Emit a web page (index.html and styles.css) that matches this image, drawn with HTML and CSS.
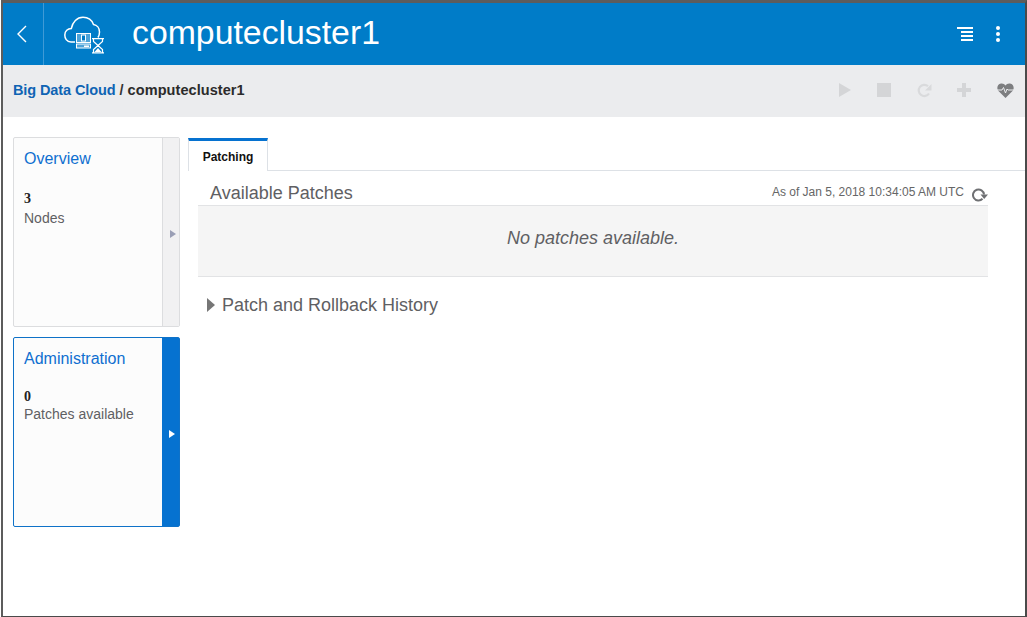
FILE: index.html
```html
<!DOCTYPE html>
<html lang="en">
<head>
<meta charset="utf-8">
<title>computecluster1</title>
<link rel="stylesheet" href="styles.css">
</head>
<body>
<div class="frame">
  <header class="topbar">
    <div class="back">
      <svg width="12" height="20" viewBox="0 0 12 20"><path d="M10 2 2 10l8 8" fill="none" stroke="#fff" stroke-width="1.400"/></svg>
    </div>
    <svg class="logo" width="40" height="38" viewBox="0 0 40 38">
      <path d="M11 26H7C2.500 26 .8 22 .8 19c0-4 3-6.500 6.500-6.500C8.500 6 13 1.200 19 1.200c5 0 9 3 10.500 7.300 3.500.5 6 3.500 6 7.500 0 2-.5 4-1.500 5.500" fill="none" stroke="#fff" stroke-width="1.500"/>
      <rect x="12.500" y="17.500" width="14" height="9" fill="#fff" fill-opacity=".3" stroke="#fff"/>
      <rect x="17.500" y="19" width="4" height="6" fill="#007cc8" stroke="#fff"/>
      <rect x="12.500" y="28" width="14" height="4" fill="#fff" fill-opacity=".3" stroke="#fff"/>
      <rect x="20" y="29.500" width="5" height="1.500" fill="#fff"/>
      <path d="M28 22.700h12M28 36.800h12M29.500 23v2.500l4.500 4-4.500 4v3M38.500 23v2.500l-4.500 4 4.500 4v3" fill="none" stroke="#fff" stroke-width="1.200"/>
      <path d="M30.500 36l3.500-4 3.500 4z" fill="#fff"/>
    </svg>
    <h1 class="title">computecluster1</h1>
    <div class="top-actions">
      <svg width="16" height="14" viewBox="0 0 16 14"><path d="M0 1h16M4 5h12M4 9h12M4 13h12" stroke="#fff" stroke-width="2"/></svg>
      <svg width="6" height="16" viewBox="0 0 6 16"><circle cx="3" cy="2" r="2" fill="#fff"/><circle cx="3" cy="8" r="2" fill="#fff"/><circle cx="3" cy="14" r="2" fill="#fff"/></svg>
    </div>
  </header>
  <div class="subbar">
    <div class="crumbs"><a class="crumb-link">Big Data Cloud</a> / <span class="crumb-current">computecluster1</span></div>
    <div class="tools">
      <svg width="14" height="16" viewBox="0 0 14 16"><path d="M1 1l12 7-12 7z" fill="#d4d5d7"/></svg>
      <svg width="14" height="14" viewBox="0 0 14 14"><rect width="14" height="14" fill="#d4d5d7"/></svg>
      <svg width="15" height="15" viewBox="0 0 15 15"><path d="M12 10.500A5.600 5.600 0 1 1 11 3.200" fill="none" stroke="#d9dadc" stroke-width="2.200"/><path d="M14.500 1v6.500H8z" fill="#d9dadc"/></svg>
      <svg width="14" height="14" viewBox="0 0 14 14"><path d="M7 0v14M0 7h14" stroke="#d4d5d7" stroke-width="4"/></svg>
      <svg width="17" height="15" viewBox="0 0 17 15"><path d="M8.500 15 1 7.500C-.5 5 .5 1 4 .5 6 .2 7.500 1 8.500 2.500 9.500 1 11 .2 13 .5c3.500.5 4.500 4.500 3 7z" fill="#7d7e80"/><path d="M0 7h5l1.500-2.500L8.500 10l1.500-4 1 1h6" fill="none" stroke="#ebecee" stroke-width="1"/></svg>
    </div>
  </div>
  <main class="content">
    <aside class="side">
      <section class="card">
        <div class="card-body">
          <h2 class="card-title">Overview</h2>
          <div class="card-num">3</div>
          <div class="card-label">Nodes</div>
        </div>
        <div class="card-handle"><span class="arrow"></span></div>
      </section>
      <section class="card active">
        <div class="card-body">
          <h2 class="card-title">Administration</h2>
          <div class="card-num">0</div>
          <div class="card-label">Patches available</div>
        </div>
        <div class="card-handle"><span class="arrow"></span></div>
      </section>
    </aside>
    <div class="main">
      <nav class="tabs"><div class="tab">Patching</div></nav>
      <div class="panel">
        <div class="panel-head">
          <h3 class="panel-title">Available Patches</h3>
          <div class="asof">
            <span>As of Jan 5, 2018 10:34:05 AM UTC</span>
            <svg width="16" height="14" viewBox="0 0 16 14"><path d="M10.500 10.800A5.500 5.500 0 1 1 12 6.500" fill="none" stroke="#6f7073" stroke-width="2"/><path d="M8.500 6.500h7.500L12.200 11z" fill="#6f7073"/></svg>
          </div>
        </div>
        <div class="empty">No patches available.</div>
        <div class="history"><span class="tri"></span><span>Patch and Rollback History</span></div>
      </div>
    </div>
  </main>
</div>
</body>
</html>
```
FILE: styles.css
```css
* { box-sizing: border-box; }
html, body { margin: 0; padding: 0; background: #fff; }
body { font-family: "Liberation Sans", Arial, sans-serif; padding-left: 1px; }
.frame {
  width: 1026px; height: 617px;
  border-top: 3px solid #5c5c5c;
  border-left: 2px solid #5c5c5c;
  border-right: 2px solid #4a4a4a;
  border-bottom: 1px solid #4a4a4a;
  display: flex; flex-direction: column;
  background: #fff; overflow: hidden;
}
.topbar { height: 62px; background: #007cc8; display: flex; align-items: center; flex: none; }
.back { width: 41px; height: 62px; padding-right: 2px; border-right: 1px solid #3f9ad6; display: flex; align-items: center; justify-content: center; flex: none; }
.logo { margin: 2px 0 0 20px; flex: none; }
.title { margin: 0 0 2px 28px; font-size: 33.8px; font-weight: 400; color: #fff; line-height: 1; }
.top-actions { margin-left: auto; padding-right: 24px; display: flex; align-items: center; gap: 22px; }
.subbar { height: 52px; background: #ebecee; display: flex; align-items: center; justify-content: space-between; flex: none; padding: 0 11px 2px 10px; }
.crumbs { font-size: 14.500px; font-weight: 700; color: #333; }
.crumb-link { color: #0f64b4; letter-spacing: -0.1px; }
.crumb-current { color: #2b2b2b; letter-spacing: 0.07px; }
.tools { display: flex; align-items: center; gap: 25.600px; }
.content { flex: 1; display: flex; align-items: flex-start; padding: 20px 0 0 10px; min-height: 0; }
.side { width: 167px; display: flex; flex-direction: column; gap: 10px; flex: none; }
.card { height: 190px; display: flex; border: 1px solid #dcdddf; background: #fcfcfc; border-radius: 2px; }
.card-body { flex: 1; padding: 12px 10px; min-width: 0; }
.card-title { margin: 0; font-size: 16px; font-weight: 400; color: #0f6fd0; line-height: 18px; }
.card-num { margin-top: 23px; font-family: "Liberation Serif", serif; font-weight: 700; font-size: 14px; line-height: 16px; color: #222; }
.card-label { margin-top: 3px; font-size: 14px; line-height: 16px; color: #5f6063; }
.card-handle { width: 17px; padding: 3px 0 0 3px; background: #f1f1f2; border-left: 1px solid #dcdddf; display: flex; align-items: center; justify-content: center; flex: none; }
.arrow { width: 0; height: 0; border-left: 6px solid #9a9fb5; border-top: 4.500px solid transparent; border-bottom: 4.500px solid transparent; }
.active { border-color: #0f72c8; }
.active .card-num { margin-top: 21px; }
.active .card-label { margin-top: 1px; }
.active .card-handle { background: #0672d0; border-left: 0; padding-top: 4px; }
.active .arrow { border-left-color: #fff; }
.main { flex: 1; min-width: 0; margin-left: 8px; }
.tabs { height: 34px; border-bottom: 1px solid #dde1e6; display: flex; align-items: flex-end; }
.tab { width: 80px; height: 33px; margin-bottom: -1px; border-top: 3px solid #0672d0; border-left: 1px solid #dde1e6; border-right: 1px solid #dde1e6; background: #fff; text-align: center; font-size: 12px; font-weight: 700; color: #111; line-height: 33px; }
.panel { padding: 0 37px 0 10px; }
.panel-head { height: 35px; display: flex; justify-content: space-between; align-items: flex-end; border-bottom: 1px solid #e2e3e5; padding: 0 0 0 12px; }
.panel-title { margin: 0 0 1px; font-size: 18px; font-weight: 400; color: #5f6063; line-height: 22px; }
.asof { display: flex; align-items: flex-start; gap: 8px; font-size: 12px; color: #666; margin-bottom: 3px; line-height: 14px; }
.asof svg { margin-top: 3px; }
.empty { height: 71px; padding-bottom: 6px; background: #f5f5f5; border-bottom: 1px solid #e2e3e5; display: flex; align-items: center; justify-content: center; font-size: 18px; font-style: italic; color: #5f6063; }
.history { margin-top: 17px; padding-left: 9px; display: flex; align-items: center; gap: 7px; font-size: 18px; color: #5f6063; line-height: 22px; }
.tri { width: 0; height: 0; border-left: 8px solid #767676; border-top: 7px solid transparent; border-bottom: 7px solid transparent; }
```
